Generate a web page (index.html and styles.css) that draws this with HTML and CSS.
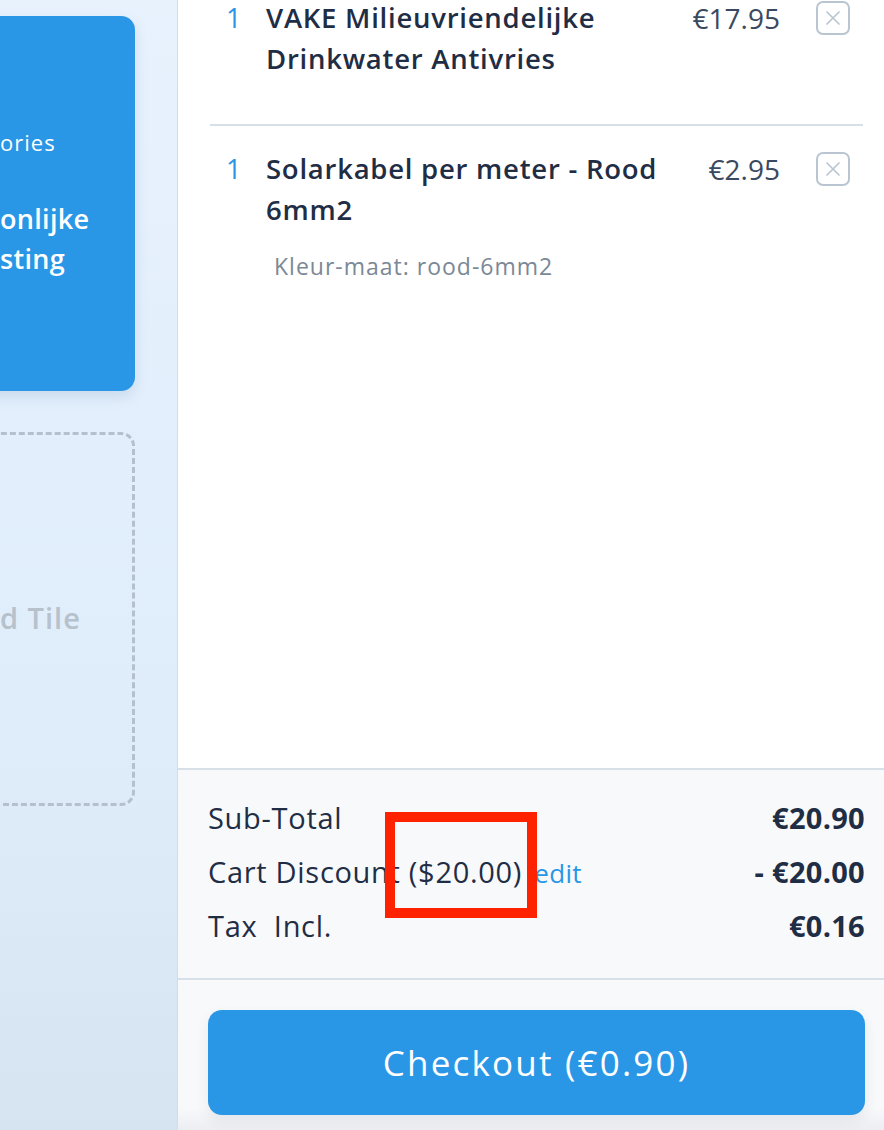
FILE: index.html
```html
<!DOCTYPE html>
<html>
<head>
<meta charset="utf-8">
<link rel="stylesheet" href="styles.css">
</head>
<body>
<div class="page">
  <aside class="side">
    <div class="promo">
      <div class="promo-sub">ories</div>
      <div class="promo-title">onlijke<br>sting</div>
    </div>
    <div class="tile">
      <span class="tile-text">d Tile</span>
    </div>
  </aside>
  <main class="cart">
    <div class="list">
      <div class="item">
        <div class="qty">1</div>
        <div class="info">
          <div class="name">VAKE Milieuvriendelijke Drinkwater Antivries</div>
        </div>
        <div class="price">€17.95</div>
        <button class="remove" aria-label="remove"><svg viewBox="0 0 20 20" width="20" height="20"><path d="M4 4 L16 16 M16 4 L4 16" stroke="#b9c6d2" stroke-width="1.7" fill="none" stroke-linecap="round"/></svg></button>
      </div>
      <div class="item">
        <div class="qty">1</div>
        <div class="info">
          <div class="name">Solarkabel per meter - Rood 6mm2</div>
          <div class="variant">Kleur-maat: rood-6mm2</div>
        </div>
        <div class="price">€2.95</div>
        <button class="remove" aria-label="remove"><svg viewBox="0 0 20 20" width="20" height="20"><path d="M4 4 L16 16 M16 4 L4 16" stroke="#b9c6d2" stroke-width="1.7" fill="none" stroke-linecap="round"/></svg></button>
      </div>
    </div>
    <div class="totals">
      <div class="row"><span class="label">Sub-Total</span><span class="val">€20.90</span></div>
      <div class="row"><span class="label">Cart Discount ($20.00) <a class="edit">edit</a></span><span class="val">- €20.00</span></div>
      <div class="row"><span class="label">Tax&nbsp; Incl.</span><span class="val">€0.16</span></div>
    </div>
    <div class="checkout-wrap">
      <button class="checkout">Checkout (€0.90)</button>
    </div>
  </main>
  <div class="mark"></div>
</div>
</body>
</html>
```
FILE: styles.css
```css
* { box-sizing: border-box; }
html, body { margin: 0; padding: 0; }
body {
  width: 884px;
  height: 1130px;
  overflow: hidden;
  font-family: "Open Sans", "DejaVu Sans", sans-serif;
  color: #1f2d45;
}
.page {
  position: relative;
  display: flex;
  height: 1130px;
}
.side {
  width: 178px;
  flex: none;
  background: linear-gradient(180deg, #e8f2fd 0%, #deecfa 70%, #d6e3f0 100%);
  border-right: 1px solid #d2dde8;
  overflow: hidden;
  padding-top: 16px;
}
.promo {
  margin-left: -40px;
  width: 175px;
  height: 375px;
  background: #2a96e6;
  border-radius: 14px;
  padding: 110px 0 0 40px;
  color: #fff;
  box-shadow: 0 6px 14px rgba(60, 110, 160, 0.15);
}
.promo-sub {
  font-size: 22px;
  line-height: 32px;
  letter-spacing: 1px;
}
.promo-title {
  margin-top: 41px;
  font-size: 27px;
  font-weight: 600;
  line-height: 40px;
  letter-spacing: 0.3px;
}
.tile {
  margin-top: 41px;
  margin-left: -40px;
  width: 175px;
  height: 374px;
  border: 3px dashed #b4c0cb;
  border-radius: 14px;
  display: flex;
  align-items: center;
  padding-left: 37px;
  padding-bottom: 4px;
}
.tile-text {
  font-size: 29px;
  font-weight: 600;
  letter-spacing: 1px;
  color: #b6c1cc;
}
.cart {
  flex: 1;
  display: flex;
  flex-direction: column;
  background: #fff;
}
.list {
  flex: 1;
  padding: 0 21px 0 32px;
  margin-top: -24px;
}
.item {
  display: flex;
  align-items: flex-start;
  padding: 22px 13px 45px 16px;
  border-bottom: 2px solid #d7e0e7;
}
.item + .item { padding-top: 23px; }
.item:last-child { border-bottom: none; }
.qty {
  width: 40px;
  flex: none;
  color: #2a96e6;
  font-size: 27px;
  line-height: 40px;
}
.info {
  flex: none;
  width: 420px;
}
.name {
  font-size: 27.5px;
  font-weight: 600;
  line-height: 40.5px;
  letter-spacing: 0.75px;
  color: #1f2d45;
}
.variant {
  margin-top: 22px;
  margin-left: 8px;
  font-size: 23px;
  line-height: 28px;
  letter-spacing: 1px;
  color: #7b8896;
}
.price {
  flex: 1;
  text-align: right;
  font-size: 28px;
  line-height: 40px;
  color: #3a4960;
}
.remove {
  flex: none;
  margin-left: 36px;
  margin-top: 3px;
  width: 34px;
  height: 34px;
  border: 2px solid #b9c6d2;
  border-radius: 7px;
  background: #fff;
  padding: 0;
  display: flex;
  align-items: center;
  justify-content: center;
}
.totals {
  border-top: 2px solid #d7e0e7;
  background: #f8f9fb;
  padding: 20px 19px 26px 30px;
}
.row {
  display: flex;
  justify-content: space-between;
  align-items: center;
  height: 54px;
  font-size: 29px;
  letter-spacing: 0.7px;
  color: #1f2d45;
}
.val {
  font-weight: 700;
  letter-spacing: 0.3px;
}
.edit {
  color: #2a96e6;
  font-size: 26px;
  letter-spacing: 0.3px;
  margin-left: 4px;
}
.checkout-wrap {
  border-top: 2px solid #d7e0e7;
  background: linear-gradient(180deg, #f8f9fb 85%, #eceef1 100%);
  padding: 30px 19px 15px 30px;
}
.checkout {
  width: 100%;
  height: 105px;
  border: none;
  border-radius: 14px;
  background: #2a96e6;
  color: #fff;
  font-family: "Open Sans", "DejaVu Sans", sans-serif;
  font-size: 35px;
  letter-spacing: 2.2px;
  display: flex;
  align-items: center;
  justify-content: center;
  box-shadow: 0 6px 14px rgba(40, 60, 90, 0.08);
}
.mark {
  position: absolute;
  left: 385px;
  top: 812px;
  width: 152px;
  height: 106px;
  border: 10px solid #ff2200;
}
```
